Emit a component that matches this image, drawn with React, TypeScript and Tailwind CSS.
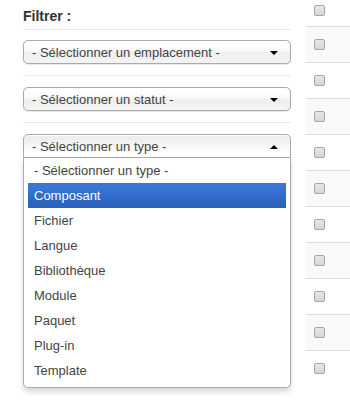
import React from "react";

const options = [
  "- Sélectionner un type -",
  "Composant",
  "Fichier",
  "Langue",
  "Bibliothèque",
  "Module",
  "Paquet",
  "Plug-in",
  "Template",
];

function ClosedSelect({ label }: { label: string }) {
  return (
    <div className="relative flex h-[24px] items-center rounded-[5px] border border-[#aaa] bg-[linear-gradient(#fff_20%,#f6f6f6_50%,#eee_52%,#f4f4f4_100%)] pl-[8px] text-[13px] text-[#444] shadow-[0_1px_1px_rgba(0,0,0,0.1)]">
      <span className="leading-none">{label}</span>
      <span className="absolute right-[12px] top-[10px] h-0 w-0 border-x-[4px] border-t-[4px] border-x-transparent border-t-black" />
    </div>
  );
}

function Checkbox() {
  return (
    <div className="h-[11px] w-[11px] rounded-[2px] border border-[#a6a6a6] bg-[linear-gradient(#e8e8e8,#d6d6d6)]" />
  );
}

export default function App() {
  const rows = Array.from({ length: 10 });
  return (
    <div
      className="flex h-[400px] w-[350px] overflow-hidden bg-white text-[#333]"
      style={{ fontFamily: '"Liberation Sans", Arial, sans-serif' }}
    >
      <div className="w-[306px] shrink-0 pl-[23px] pr-[15px]">
        <div className="flex h-[29px] items-center pt-[3px] text-[14px] font-bold leading-none text-[#333]">
          Filtrer :
        </div>
        <div className="h-px bg-[#e8e8e8]" />
        <div className="pt-[10px] pb-[11px]">
          <ClosedSelect label="- Sélectionner un emplacement -" />
        </div>
        <div className="h-px bg-[#e8e8e8]" />
        <div className="pt-[11px] pb-[11px]">
          <ClosedSelect label="- Sélectionner un statut -" />
        </div>
        <div className="h-px bg-[#e8e8e8]" />
        <div className="pt-[11px]">
          <div className="relative">
            <div className="relative flex h-[24px] items-center rounded-t-[5px] border border-[#aaa] bg-[linear-gradient(#eee_20%,#fff_80%)] pl-[8px] text-[13px] text-[#444] shadow-[inset_0_1px_0_#fff]">
              <span className="leading-none">- Sélectionner un type -</span>
              <span className="absolute right-[12px] top-[10px] h-0 w-0 border-x-[4px] border-b-[4px] border-x-transparent border-b-black" />
            </div>
            <div className="absolute left-0 right-0 top-full rounded-b-[5px] border border-t-0 border-[#aaa] bg-white shadow-[0_4px_5px_rgba(0,0,0,0.15)]">
              <ul className="mb-[4px] mr-[4px] pl-[4px]">
                {options.map((o, i) => (
                  <li
                    key={o}
                    className={
                      "h-[25px] px-[6px] pt-[5px] text-[13px] leading-[15px] " +
                      (i === 1
                        ? "bg-[linear-gradient(#3875d7_20%,#2a62bc_90%)] text-white"
                        : "text-[#444]")
                    }
                  >
                    {o}
                  </li>
                ))}
              </ul>
            </div>
          </div>
        </div>
      </div>
      <div className="flex-1">
        <div className="flex h-[26px] items-start pl-[8px] pt-[5px]">
          <Checkbox />
        </div>
        {rows.map((_, i) => (
          <div
            key={i}
            className={
              "flex h-[36px] items-center border-t border-[#ddd] pl-[8px] " +
              (i % 2 === 0 ? "bg-[#f9f9f9]" : "bg-white")
            }
          >
            <Checkbox />
          </div>
        ))}
      </div>
    </div>
  );
}
